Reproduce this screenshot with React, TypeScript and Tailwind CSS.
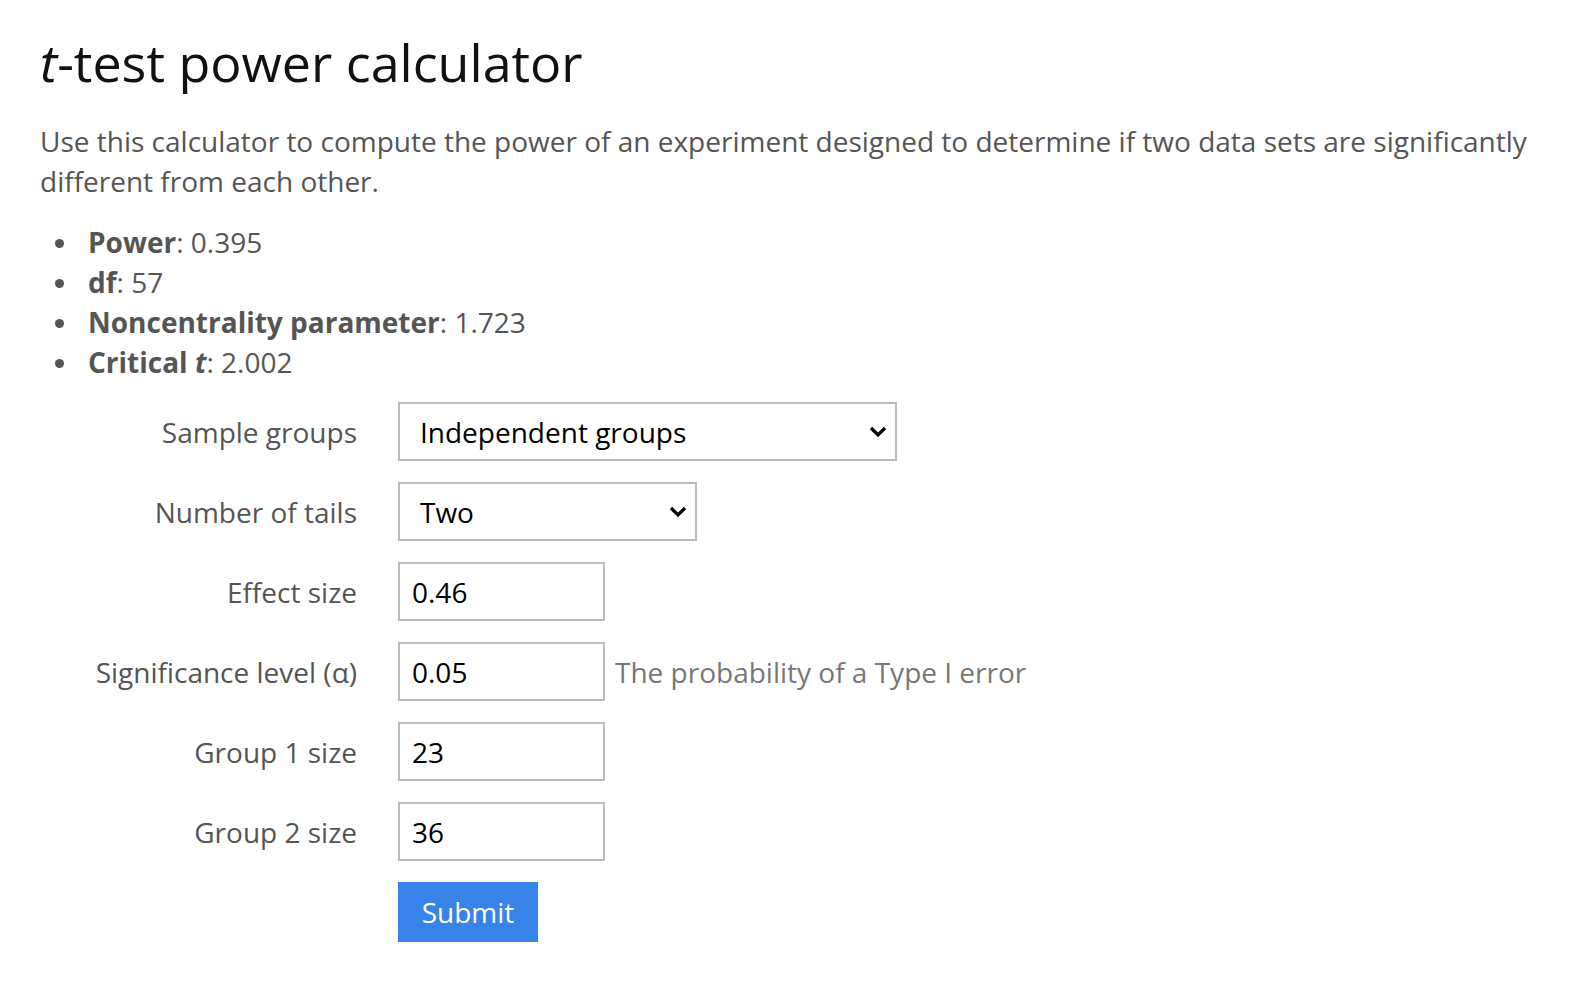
import React from "react";

const font = { fontFamily: '"Open Sans", "Noto Sans", sans-serif' };

function Chevron() {
  return (
    <svg className="pointer-events-none absolute right-[10px] top-1/2 -translate-y-1/2" width="18" height="12" viewBox="0 0 18 12">
      <path d="M2 2 L9 9 L16 2" fill="none" stroke="#000" strokeWidth="3.2" />
    </svg>
  );
}

function Row({ label, children, note }: { label: React.ReactNode; children: React.ReactNode; note?: string }) {
  return (
    <div className="flex items-center">
      <label className="w-[358px] shrink-0 pr-[41px] text-right text-[28px] text-[#555]">{label}</label>
      {children}
      {note && <span className="ml-[10px] text-[28px] text-[#777]">{note}</span>}
    </div>
  );
}

function Field({ value }: { value: string }) {
  return (
    <input
      defaultValue={value}
      className="h-[59px] w-[207px] border-2 border-[#bbb] bg-white pl-[12px] text-[28px] text-black outline-none"
      style={font}
    />
  );
}

function Select({ value, width }: { value: string; width: string }) {
  return (
    <div className={`relative ${width}`}>
      <select
        defaultValue={value}
        className="h-[59px] w-full appearance-none border-2 border-[#bbb] bg-white pl-[20px] text-[28px] text-black outline-none"
        style={font}
      >
        <option>{value}</option>
      </select>
      <Chevron />
    </div>
  );
}

const bullet =
  "relative before:absolute before:left-[-33px] before:top-[17px] before:h-[9px] before:w-[9px] before:rounded-full before:bg-[#555] before:content-['']";

export default function App() {
  return (
    <div className="min-h-screen bg-white px-[40px] pt-[26px] text-[#555]" style={font}>
      <h1 className="text-[52px] leading-[72px] text-[#111]">
        <em>t</em>-test power calculator
      </h1>
      <p className="mt-[23px] text-[28px] leading-[40px]">
        Use this calculator to compute the power of an experiment designed to determine if two data sets are significantly
        different from each other.
      </p>
      <ul className="mt-[21px] pl-[48px] text-[28px] leading-[40px]">
        <li className={bullet}>
          <b>Power</b>: 0.395
        </li>
        <li className={bullet}>
          <b>df</b>: 57
        </li>
        <li className={bullet}>
          <b>Noncentrality parameter</b>: 1.723
        </li>
        <li className={bullet}>
          <b>
            Critical <em>t</em>
          </b>
          : 2.002
        </li>
      </ul>
      <form className="mt-[20px] flex flex-col gap-[21px]" onSubmit={(e) => e.preventDefault()}>
        <Row label="Sample groups">
          <Select value="Independent groups" width="w-[499px]" />
        </Row>
        <Row label="Number of tails">
          <Select value="Two" width="w-[299px]" />
        </Row>
        <Row label="Effect size">
          <Field value="0.46" />
        </Row>
        <Row label="Significance level (α)" note="The probability of a Type I error">
          <Field value="0.05" />
        </Row>
        <Row label="Group 1 size">
          <Field value="23" />
        </Row>
        <Row label="Group 2 size">
          <Field value="36" />
        </Row>
        <div className="pl-[358px]">
          <button type="submit" className="h-[60px] w-[140px] bg-[#3783e8] text-[28px] text-white">
            Submit
          </button>
        </div>
      </form>
    </div>
  );
}
